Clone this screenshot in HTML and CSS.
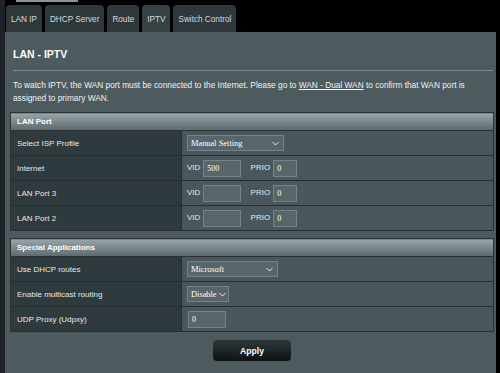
FILE: index.html
```html
<!DOCTYPE html>
<html lang="en">
<head>
    <meta charset="UTF-8">
    <meta name="viewport" content="width=device-width, initial-scale=1.0">
    <title>LAN - IPTV</title>
    <link rel="stylesheet" href="styles.css">
</head>
<body>
<div class="page">
    <div class="scroll-thumb"></div>

    <ul class="tabs">
        <li class="tab">LAN IP</li>
        <li class="tab">DHCP Server</li>
        <li class="tab">Route</li>
        <li class="tab active">IPTV</li>
        <li class="tab">Switch Control</li>
    </ul>

    <div class="panel">
        <h2 class="panel-title">LAN - IPTV</h2>
        <div class="divider"></div>
        <p class="desc">To watch IPTV, the WAN port must be connected to the Internet. Please go to <a href="#">WAN - Dual WAN</a> to confirm that WAN port is assigned to primary WAN.</p>

        <table class="form-table">
            <thead>
                <tr><th colspan="2">LAN Port</th></tr>
            </thead>
            <tbody>
                <tr>
                    <th>Select ISP Profile</th>
                    <td>
                        <span class="select-wrap wide">
                            <select class="input-select"><option>Manual Setting</option></select>
                            <svg class="chevron" width="7" height="5" viewBox="0 0 7 5"><path d="M0.5 1 L3.5 4 L6.5 1" fill="none" stroke="#e8e8e8" stroke-width="1"/></svg>
                        </span>
                    </td>
                </tr>
                <tr>
                    <th>Internet</th>
                    <td>
                        <span class="field-label">VID</span><input class="input-text vid" type="text" value="500">
                        <span class="field-label prio">PRIO</span><input class="input-text short" type="text" value="0">
                    </td>
                </tr>
                <tr>
                    <th>LAN Port 3</th>
                    <td>
                        <span class="field-label">VID</span><input class="input-text vid" type="text" value="">
                        <span class="field-label prio">PRIO</span><input class="input-text short" type="text" value="0">
                    </td>
                </tr>
                <tr>
                    <th>LAN Port 2</th>
                    <td>
                        <span class="field-label">VID</span><input class="input-text vid" type="text" value="">
                        <span class="field-label prio">PRIO</span><input class="input-text short" type="text" value="0">
                    </td>
                </tr>
            </tbody>
        </table>

        <table class="form-table">
            <thead>
                <tr><th colspan="2">Special Applications</th></tr>
            </thead>
            <tbody>
                <tr>
                    <th>Use DHCP routes</th>
                    <td>
                        <span class="select-wrap medium">
                            <select class="input-select"><option>Microsoft</option></select>
                            <svg class="chevron" width="7" height="5" viewBox="0 0 7 5"><path d="M0.5 1 L3.5 4 L6.5 1" fill="none" stroke="#e8e8e8" stroke-width="1"/></svg>
                        </span>
                    </td>
                </tr>
                <tr>
                    <th>Enable multicast routing</th>
                    <td>
                        <span class="select-wrap small">
                            <select class="input-select"><option>Disable</option></select>
                            <svg class="chevron" width="7" height="5" viewBox="0 0 7 5"><path d="M0.5 1 L3.5 4 L6.5 1" fill="none" stroke="#e8e8e8" stroke-width="1"/></svg>
                        </span>
                    </td>
                </tr>
                <tr>
                    <th>UDP Proxy (Udpxy)</th>
                    <td>
                        <input class="input-text udp" type="text" value="0">
                    </td>
                </tr>
            </tbody>
        </table>

        <div class="apply-row">
            <button class="button-apply">Apply</button>
        </div>
    </div>
</div>
</body>
</html>
```

FILE: styles.css
```css
html, body {
    margin: 0;
    padding: 0;
    background-color: #000;
    height: 100%;
    overflow: hidden;
}

body {
    font-family: 'Liberation Sans', Arial, sans-serif;
    color: #fff;
}

.page {
    border-left: 5px solid #1c2326;
    width: 491px;
    height: 373px;
}

.scroll-thumb {
    width: 62px;
    height: 2px;
    margin-left: 11px;
    background-color: #8b9396;
}

/* Tabs */
.tabs {
    list-style: none;
    display: flex;
    gap: 3px;
    margin: 3px 0 0 1px;
    padding: 0;
    height: 27px;
}

.tab {
    background-color: #2e383b;
    color: #d6d9da;
    font-size: 8.2px;
    padding: 0 5px;
    line-height: 29px;
    border-radius: 4px 4px 0 0;
}

.tab.active {
    background-color: #364144;
}

/* Panel */
.panel {
    background-color: #4d5a5e;
    height: 341px;
    padding: 15px 2px 0 5px;
    box-sizing: border-box;
}

.panel-title {
    margin: 0 0 0 3px;
    font-size: 10.5px;
    line-height: 14px;
    font-weight: bold;
    color: #fff;
}

.divider {
    height: 1px;
    background-color: #7d898c;
    margin: 9px 0 0 3px;
    width: 480px;
}

.desc {
    margin: 8px 0 0 3px;
    font-size: 8.3px;
    line-height: 13px;
    color: #f2f2f2;
}

.desc a {
    color: #f2f2f2;
}

/* Form tables */
.form-table {
    width: 484px;
    border-collapse: collapse;
    margin-top: 7px;
    border: 1px solid #2a3235;
}

.form-table thead th {
    height: 17px;
    padding: 0 0 0 6px;
    text-align: left;
    font-size: 8px;
    font-weight: bold;
    color: #fff;
    background: linear-gradient(to bottom, #98a4a7, #5c6a6e);
    border-bottom: 1px solid #2a3235;
}

.form-table tbody th {
    width: 164px;
    height: 24px;
    padding: 0 0 0 6px;
    text-align: left;
    font-size: 8px;
    font-weight: normal;
    color: #e6e8e8;
    background-color: #2f3a3e;
    border-bottom: 1px solid #262e31;
    border-right: 1px solid #262e31;
}

.form-table tbody td {
    height: 24px;
    padding: 0 0 0 5px;
    font-size: 8px;
    background-color: #4a585d;
    border-bottom: 1px solid #262e31;
}

.field-label {
    color: #e6e8e8;
    font-size: 8px;
    margin-right: 3px;
}

.field-label.prio {
    margin-left: 7px;
}

.input-text {
    font-family: 'Liberation Serif', 'Times New Roman', serif;
    font-size: 8px;
    color: #fff;
    background-color: #58666a;
    border: 1px solid #75838a;
    height: 17px;
    box-sizing: border-box;
    padding: 0 3px;
    vertical-align: middle;
    outline: none;
}

.input-text.vid {
    width: 38px;
}

.input-text.short {
    width: 24px;
}

.input-text.udp {
    width: 38px;
    margin-left: 1px;
}

.select-wrap {
    position: relative;
    display: inline-block;
    vertical-align: middle;
}

.input-select {
    appearance: none;
    -webkit-appearance: none;
    font-family: 'Liberation Serif', 'Times New Roman', serif;
    font-size: 8.4px;
    color: #fff;
    background-color: #57666b;
    border: 1px solid #75838a;
    height: 16px;
    padding: 0 2px 0 3px;
    width: 100%;
    outline: none;
}

.select-wrap.wide {
    width: 97px;
}

.select-wrap.medium {
    width: 91px;
}

.select-wrap.small {
    width: 42px;
}

.select-wrap.small .chevron {
    right: 3px;
}

.chevron {
    position: absolute;
    right: 5px;
    top: 6px;
    pointer-events: none;
}

/* Apply */
.apply-row {
    width: 484px;
    display: flex;
    justify-content: center;
    margin-top: 8px;
}

.button-apply {
    width: 78px;
    height: 21px;
    border: none;
    border-radius: 4px;
    background: linear-gradient(to bottom, #2d373a, #0e1315);
    color: #fff;
    font-family: 'Liberation Sans', Arial, sans-serif;
    font-size: 8.6px;
    font-weight: bold;
    cursor: pointer;
}
```
